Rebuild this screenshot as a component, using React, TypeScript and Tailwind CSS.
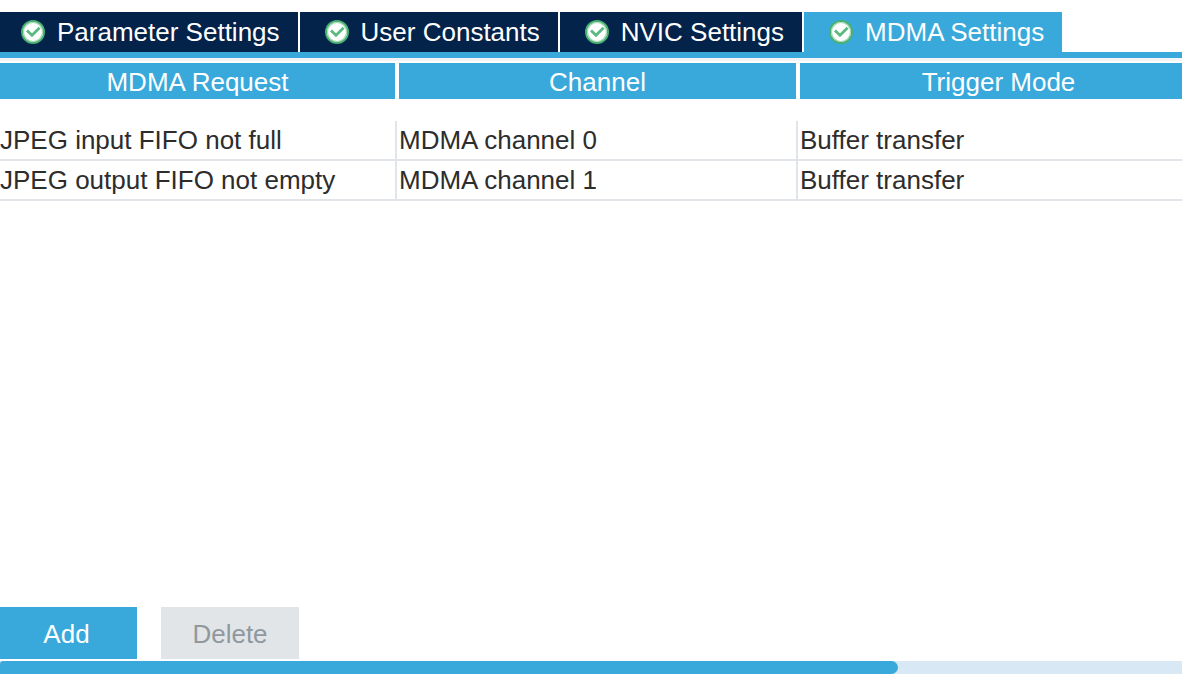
import React, { useState } from 'react';

type TabId = 'parameter' | 'user' | 'nvic' | 'mdma';

interface MdmaRequest {
  id: number;
  request: string;
  channel: string;
  trigger: string;
}

const tabs: { id: TabId; label: string }[] = [
  { id: 'parameter', label: 'Parameter Settings' },
  { id: 'user', label: 'User Constants' },
  { id: 'nvic', label: 'NVIC Settings' },
  { id: 'mdma', label: 'MDMA Settings' },
];

const columns = ['MDMA Request', 'Channel', 'Trigger Mode'];

const requests: MdmaRequest[] = [
  { id: 1, request: 'JPEG input FIFO not full', channel: 'MDMA channel 0', trigger: 'Buffer transfer' },
  { id: 2, request: 'JPEG output FIFO not empty', channel: 'MDMA channel 1', trigger: 'Buffer transfer' },
];

const CheckBadge = () => (
  <svg viewBox="0 0 24 24" className="h-6 w-6 shrink-0" aria-hidden="true">
    <circle cx="12" cy="12" r="11" fill="#ffffff" stroke="#49b170" strokeWidth="2" />
    <circle cx="12" cy="12" r="9.5" fill="none" stroke="#a5d8b7" strokeWidth="1.2" />
    <path d="M6 10.4l5 4.8 7.6-7.4" fill="none" stroke="#5cb980" strokeWidth="2.8" />
  </svg>
);

const App: React.FC = () => {
  const [activeTab, setActiveTab] = useState<TabId>('mdma');

  return (
    <main className="flex min-h-screen flex-col overflow-hidden bg-white pt-3 font-['Liberation_Sans',Arial,sans-serif] text-[26px] leading-10 text-[#2d2d2d]">
      <nav role="tablist" className="flex gap-0.5 border-b-6 border-[#39a9dc]">
        {tabs.map((tab) => (
          <button
            key={tab.id}
            role="tab"
            aria-selected={activeTab === tab.id}
            onClick={() => setActiveTab(tab.id)}
            className={`flex h-10 items-center gap-3 pr-[18px] pl-[25px] whitespace-nowrap text-white first:pl-[21px] ${
              activeTab === tab.id ? 'bg-[#39a9dc]' : 'bg-[#03234b]'
            }`}
          >
            <CheckBadge />
            {tab.label}
          </button>
        ))}
      </nav>

      <section className="flex-1 overflow-hidden border-t-3 border-[#f2f4f5] pt-0.5">
        <table className="w-full min-w-[1199px] table-fixed border-separate border-spacing-0">
          <thead>
            <tr>
              {columns.map((column) => (
                <th
                  key={column}
                  scope="col"
                  className="border-x-2 border-white p-0 pb-[22px] font-normal text-white first:w-[397px] first:border-l-0"
                >
                  <div className="h-9 bg-[#39a9dc] leading-[38px]">{column}</div>
                </th>
              ))}
            </tr>
          </thead>
          <tbody>
            {requests.map((row) => (
              <tr key={row.id}>
                <td className="h-10 border-r-2 border-b-2 border-[#e1e4e8] p-0 leading-[38px]">{row.request}</td>
                <td className="h-10 border-r-2 border-b-2 border-[#e1e4e8] p-0 pl-0.5 leading-[38px]">{row.channel}</td>
                <td className="h-10 border-b-2 border-[#e1e4e8] p-0 pl-0.5 leading-[38px]">{row.trigger}</td>
              </tr>
            ))}
          </tbody>
        </table>
      </section>

      <footer className="flex gap-6 pb-0.5">
        <button className="h-[52px] w-[137px] bg-[#39a9dc] pt-0.5 pr-1 text-white">Add</button>
        <button disabled className="h-[52px] w-[138px] bg-[#e1e5e8] pt-0.5 text-[#90989e]">
          Delete
        </button>
      </footer>

      <div className="h-[13px] bg-[#d8e8f5]">
        <div className="h-full w-[76%] rounded-r-lg rounded-tl-sm bg-[#39a9dc]" />
      </div>
    </main>
  );
};

export default App;
